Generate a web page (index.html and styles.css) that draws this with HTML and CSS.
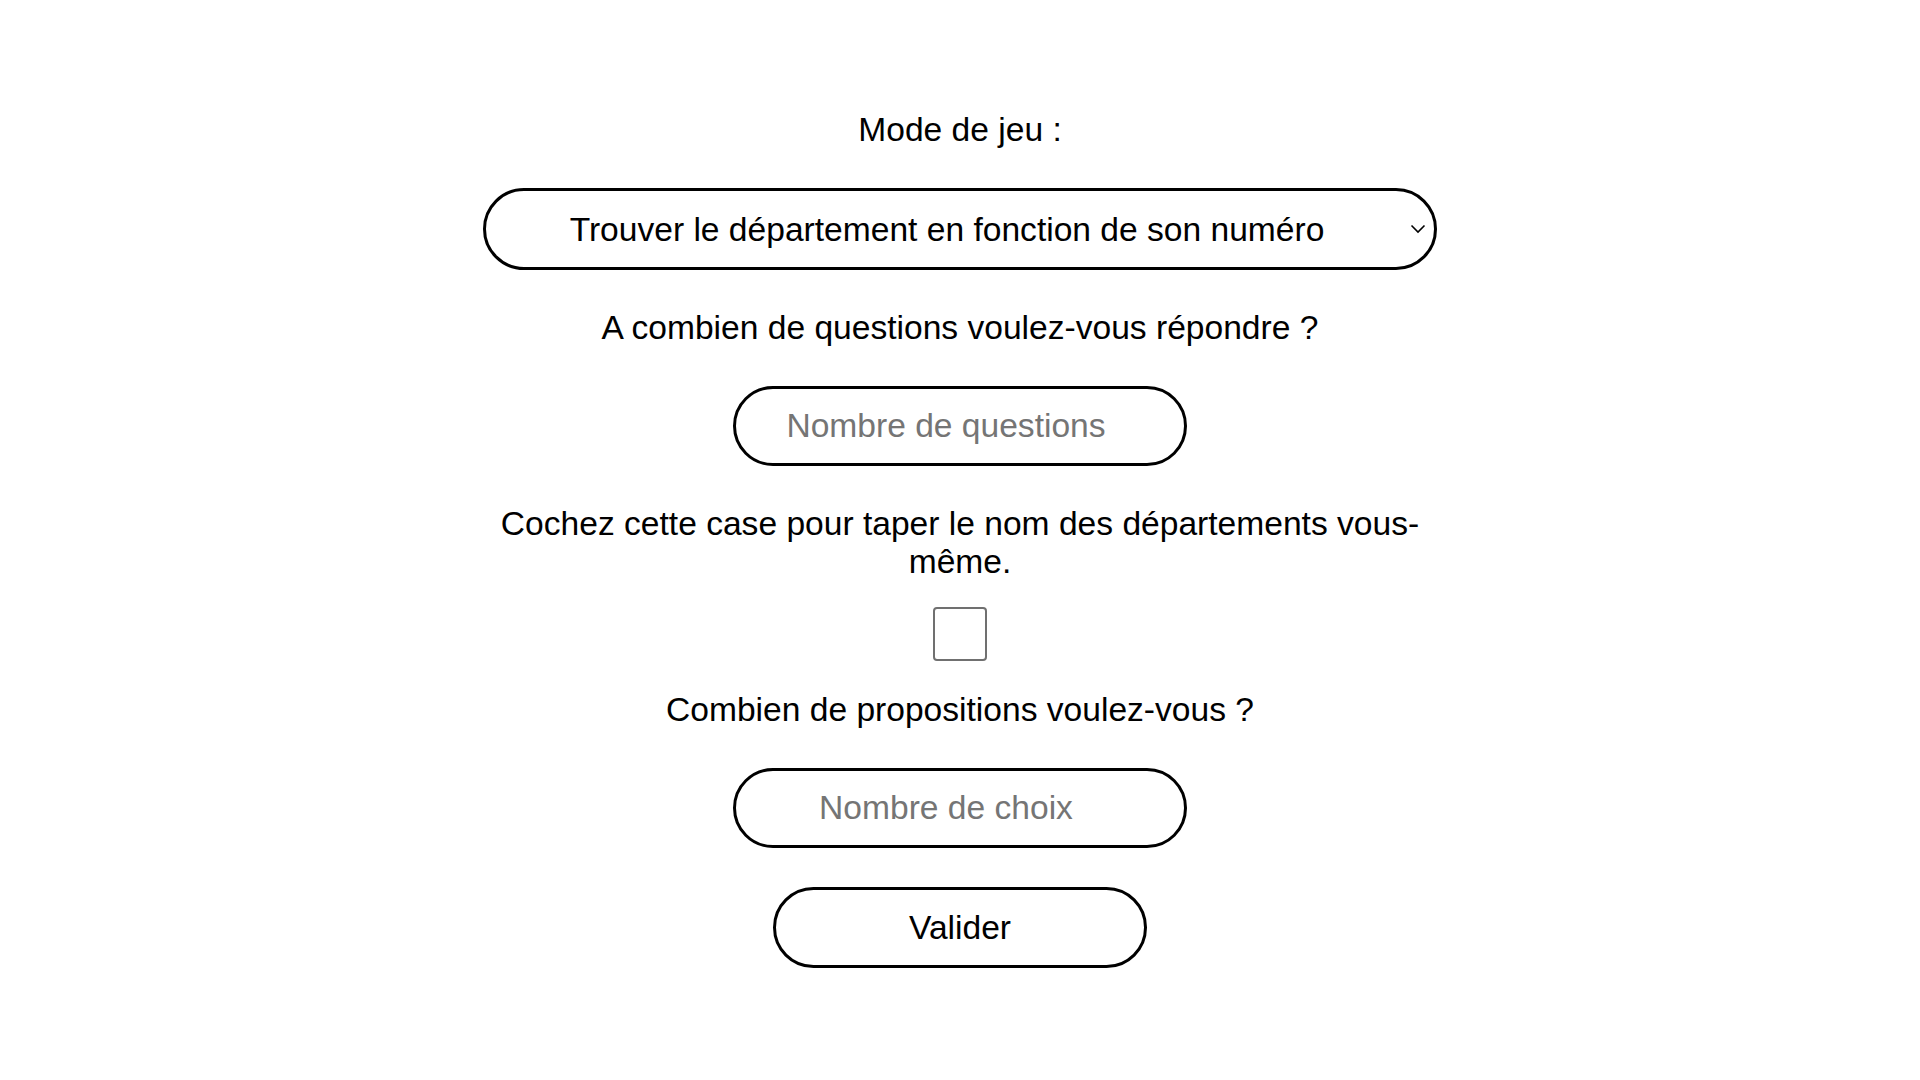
FILE: index.html
```html
<!DOCTYPE html>
<html lang="fr">
<head>
<meta charset="utf-8">
<title>Jeu des départements</title>
<link rel="stylesheet" href="styles.css">
</head>
<body>
<form class="form">
  <label class="label" for="mode">Mode de jeu :</label>
  <div class="select-wrap">
    <select id="mode" class="select">
      <option>Trouver le département en fonction de son numéro</option>
      <option>Trouver le numéro en fonction du département</option>
    </select>
    <svg class="chevron" width="16" height="10" viewBox="0 0 16 10" aria-hidden="true"><path d="M1.5 1.5 L8 8 L14.5 1.5" fill="none" stroke="#000" stroke-width="1.6"/></svg>
  </div>
  <label class="label" for="nbq">A combien de questions voulez-vous répondre ?</label>
  <input id="nbq" class="field" type="number" placeholder="Nombre de questions">
  <label class="label" for="saisie">Cochez cette case pour taper le nom des départements vous-même.</label>
  <input id="saisie" class="check" type="checkbox">
  <label class="label" for="nbc">Combien de propositions voulez-vous ?</label>
  <input id="nbc" class="field" type="number" placeholder="Nombre de choix">
  <button type="button" class="btn">Valider</button>
</form>
</body>
</html>
```
FILE: styles.css
```css
html, body {
  margin: 0;
  padding: 0;
  background: #fff;
}
body {
  font-family: "Liberation Sans", Arial, sans-serif;
  font-size: 33.6px;
  color: #000;
}
.form {
  width: 954px;
  margin: 0 auto;
  padding-top: 111px;
  display: flex;
  flex-direction: column;
  align-items: center;
  gap: 39px;
}
.label {
  display: block;
  text-align: center;
  line-height: 38px;
}
.select-wrap {
  position: relative;
  width: 954px;
}
.select {
  -webkit-appearance: none;
  appearance: none;
  display: block;
  box-sizing: border-box;
  width: 100%;
  height: 82px;
  border: 3px solid #000;
  border-radius: 41px;
  background: #fff;
  color: #000;
  font: inherit;
  text-align: center;
  text-align-last: center;
  padding: 0 26px 0 0;
  margin: 0;
  outline: none;
}
.chevron {
  position: absolute;
  right: 11px;
  top: 36px;
  pointer-events: none;
}
.field {
  box-sizing: border-box;
  width: 454px;
  height: 80px;
  border: 3px solid #000;
  border-radius: 40px;
  background: #fff;
  font: inherit;
  color: #000;
  text-align: center;
  padding: 0 28px 0 0;
  margin: 0;
  outline: none;
  -moz-appearance: textfield;
}
.field::-webkit-inner-spin-button,
.field::-webkit-outer-spin-button {
  -webkit-appearance: none;
  margin: 0;
}
.field::placeholder {
  color: #757575;
  opacity: 1;
}
.check {
  -webkit-appearance: none;
  appearance: none;
  box-sizing: border-box;
  width: 54px;
  height: 54px;
  border: 2px solid #707070;
  border-radius: 4px;
  background: #fff;
  margin: -13px 0 -9px 0;
}
.btn {
  box-sizing: border-box;
  width: 374px;
  height: 81px;
  border: 3px solid #000;
  border-radius: 41px;
  background: #fff;
  color: #000;
  font: inherit;
  padding: 0;
  margin: 0;
  cursor: pointer;
}
```
